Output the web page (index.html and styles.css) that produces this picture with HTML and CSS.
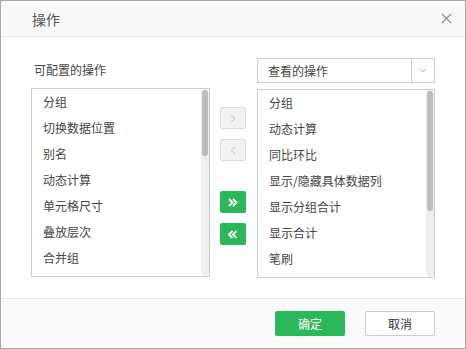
FILE: index.html
```html
<!DOCTYPE html>
<html lang="zh">
<head>
    <meta charset="UTF-8">
    <title>操作</title>
    <link rel="stylesheet" href="styles.css">
</head>
<body>
    <div class="dialog">
        <div class="dialog-header">
            <span class="dialog-title">操作</span>
            <span class="dialog-close">
                <svg width="11" height="11" viewBox="0 0 11 11"><path d="M1 1 L10 10 M10 1 L1 10" stroke="#8c8c8c" stroke-width="1.2" fill="none"/></svg>
            </span>
        </div>

        <div class="dialog-body">
            <div class="column">
                <div class="column-head">可配置的操作</div>
                <div class="list-box">
                    <ul class="op-list">
                        <li>分组</li>
                        <li>切换数据位置</li>
                        <li>别名</li>
                        <li>动态计算</li>
                        <li>单元格尺寸</li>
                        <li>叠放层次</li>
                        <li>合并组</li>
                    </ul>
                    <div class="scrollbar"><div class="thumb" style="height: 66px"></div></div>
                </div>
            </div>

            <div class="move-buttons">
                <button class="move-btn disabled">
                    <svg width="6" height="9" viewBox="0 0 6 9"><path d="M1 1 L5 4.5 L1 8" stroke="#c4c4c4" fill="none"/></svg>
                </button>
                <button class="move-btn disabled">
                    <svg width="6" height="9" viewBox="0 0 6 9"><path d="M5 1 L1 4.5 L5 8" stroke="#c4c4c4" fill="none"/></svg>
                </button>
                <button class="move-btn green gap-top">
                    <svg width="10" height="9" viewBox="0 0 10 9"><path d="M1 1 L4.5 4.5 L1 8 M5 1 L8.5 4.5 L5 8" stroke="#ffffff" stroke-width="1.8" fill="none"/></svg>
                </button>
                <button class="move-btn green">
                    <svg width="10" height="9" viewBox="0 0 10 9"><path d="M4.5 1 L1 4.5 L4.5 8 M8.5 1 L5 4.5 L8.5 8" stroke="#ffffff" stroke-width="1.8" fill="none"/></svg>
                </button>
            </div>

            <div class="column">
                <div class="select-box">
                    <span class="select-text">查看的操作</span>
                    <span class="select-arrow">
                        <svg width="8" height="5" viewBox="0 0 8 5"><path d="M0.5 0.5 L4 4 L7.5 0.5" stroke="#b5b5b5" fill="none"/></svg>
                    </span>
                </div>
                <div class="list-box narrow">
                    <ul class="op-list">
                        <li>分组</li>
                        <li>动态计算</li>
                        <li>同比环比</li>
                        <li>显示/隐藏具体数据列</li>
                        <li>显示分组合计</li>
                        <li>显示合计</li>
                        <li>笔刷</li>
                    </ul>
                    <div class="scrollbar"><div class="thumb" style="height: 120px"></div></div>
                </div>
            </div>
        </div>

        <div class="dialog-footer">
            <button class="btn btn-ok">确定</button>
            <button class="btn btn-cancel">取消</button>
        </div>
    </div>
</body>
</html>
```

FILE: styles.css
```css
body {
    margin: 0;
    padding: 0;
    font-family: "Noto Sans CJK SC", "Liberation Sans", sans-serif;
    font-size: 12px;
    color: #444444;
    background-color: #ffffff;
}

.dialog {
    width: 466px;
    height: 349px;
    box-sizing: border-box;
    border: 1px solid #a9a9a9;
    display: flex;
    flex-direction: column;
    background-color: #ffffff;
}

.dialog-header {
    height: 35px;
    border-bottom: 1px solid #e5e5e5;
    background-color: #f8f8f8;
    display: flex;
    align-items: center;
    justify-content: space-between;
    padding: 0 13px 0 31px;
}

.dialog-title {
    font-size: 14px;
    color: #555555;
}

.dialog-close {
    display: flex;
}

.dialog-body {
    flex: 1;
    display: flex;
    padding: 21px 30px 0 30px;
}

.column {
    display: flex;
    flex-direction: column;
    gap: 6px;
}

.column-head {
    height: 24px;
    line-height: 24px;
    padding-left: 3px;
}

.list-box {
    width: 179px;
    height: 189px;
    box-sizing: border-box;
    border: 1px solid #cccccc;
    display: flex;
    overflow: hidden;
}

.list-box.narrow {
    width: 178px;
}

.op-list {
    flex: 1;
    list-style: none;
    margin: 0;
    padding: 0;
}

.op-list li {
    height: 26px;
    line-height: 26px;
    padding-left: 11px;
    white-space: nowrap;
}

.scrollbar {
    width: 8px;
    background-color: #eeeeee;
    border-radius: 4px;
    padding: 1px;
    box-sizing: border-box;
}

.thumb {
    background-color: #bdbdbd;
    border-radius: 3px;
}

.move-buttons {
    display: flex;
    flex-direction: column;
    gap: 10px;
    margin: 49px 11px 0 10px;
}

.move-btn {
    width: 26px;
    height: 22px;
    padding: 0;
    border-radius: 2px;
    display: flex;
    align-items: center;
    justify-content: center;
}

.move-btn.disabled {
    background-color: #f2f2f2;
    border: 1px solid #dddddd;
}

.move-btn.green {
    background-color: #2bb85a;
    border: none;
}

.move-btn.gap-top {
    margin-top: 20px;
}

.select-box {
    width: 178px;
    height: 25px;
    box-sizing: border-box;
    border: 1px solid #cccccc;
    display: flex;
    align-items: center;
}

.select-text {
    flex: 1;
    padding-left: 10px;
}

.select-arrow {
    width: 22px;
    height: 100%;
    border-left: 1px solid #cccccc;
    display: flex;
    align-items: center;
    justify-content: center;
}

.dialog-footer {
    height: 50px;
    border-top: 1px solid #e5e5e5;
    background-color: #fafafa;
    display: flex;
    justify-content: flex-end;
    align-items: flex-start;
    gap: 20px;
    padding: 12px 30px 0 0;
    box-sizing: border-box;
}

.btn {
    width: 70px;
    height: 25px;
    font-family: "Noto Sans CJK SC", "Liberation Sans", sans-serif;
    font-size: 12px;
    border-radius: 2px;
    cursor: pointer;
}

.btn-ok {
    background-color: #2bb85a;
    color: #ffffff;
    border: none;
}

.btn-cancel {
    background-color: #ffffff;
    color: #333333;
    border: 1px solid #cccccc;
}
```
